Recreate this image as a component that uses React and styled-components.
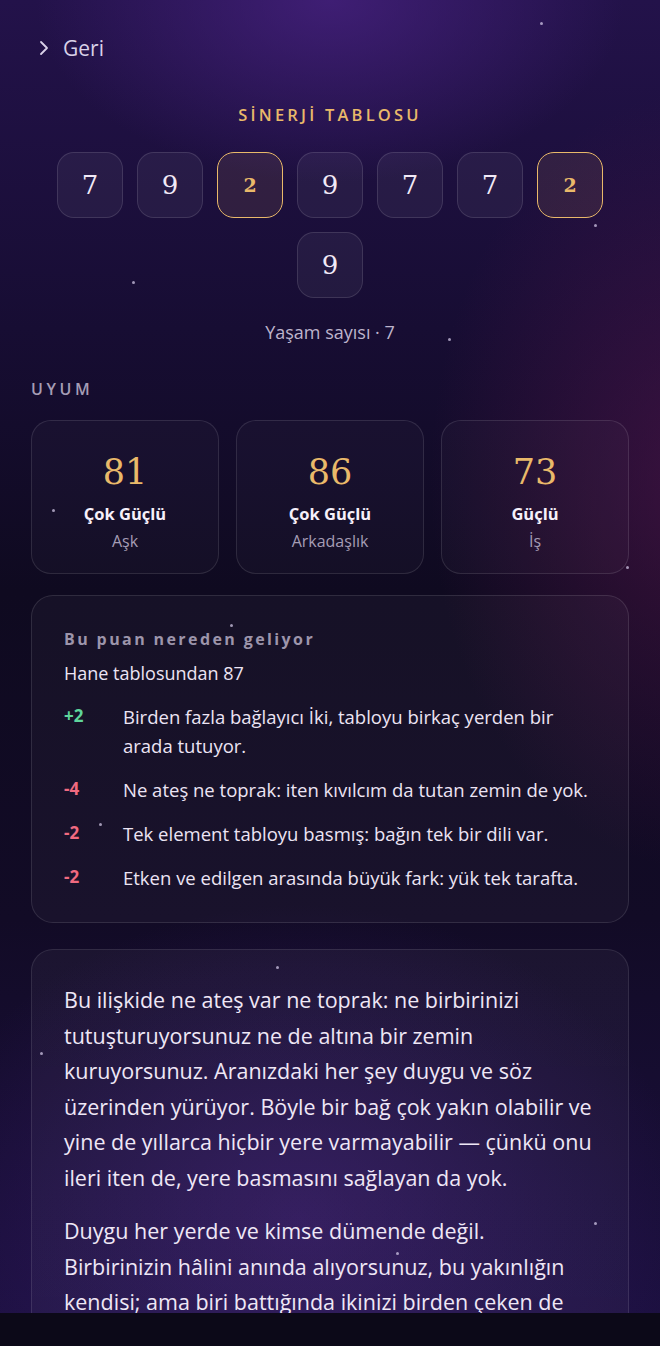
import React from 'react'
import styled, { createGlobalStyle } from 'styled-components'

const GlobalStyle = createGlobalStyle`
    html, body {
        margin: 0;
        padding: 0;
        background: #0c0918;
    }
    * {
        box-sizing: border-box;
    }
`

const gold = '#e9b96a'
const text = '#ece4f4'
const muted = '#a59db5'

const board = [
    { n: 7 }, { n: 9 }, { n: 2, hot: true }, { n: 9 },
    { n: 7 }, { n: 7 }, { n: 2, hot: true }, { n: 9 },
]

const scores = [
    { value: 81, label: 'Çok Güçlü', area: 'Aşk' },
    { value: 86, label: 'Çok Güçlü', area: 'Arkadaşlık' },
    { value: 73, label: 'Güçlü', area: 'İş' },
]

const reasons = [
    { delta: '+2', text: 'Birden fazla bağlayıcı İki, tabloyu birkaç yerden bir arada tutuyor.' },
    { delta: '-4', text: 'Ne ateş ne toprak: iten kıvılcım da tutan zemin de yok.' },
    { delta: '-2', text: 'Tek element tabloyu basmış: bağın tek bir dili var.' },
    { delta: '-2', text: 'Etken ve edilgen arasında büyük fark: yük tek tarafta.' },
]

const stars = [
    [540, 22], [594, 224], [132, 281], [448, 338], [52, 509], [626, 566],
    [230, 624], [99, 823], [276, 966], [40, 1052], [594, 1222], [396, 1252],
]

export default function App() {
    return (
        <>
            <GlobalStyle />
            <Screen>
                {stars.map(([x, y], i) => (
                    <Star key={i} style={{ left: x, top: y }} />
                ))}
                <Content>
                    <Back>
                        <svg width="14" height="18" viewBox="0 0 14 18" fill="none">
                            <path d="M4 3l6 6-6 6" stroke="#d9d1e8" strokeWidth="1.8" strokeLinecap="round" strokeLinejoin="round" />
                        </svg>
                        Geri
                    </Back>

                    <Heading>SİNERJİ TABLOSU</Heading>
                    <Board>
                        {board.map((t, i) => (
                            <Tile key={i} hot={t.hot}>{t.n}</Tile>
                        ))}
                    </Board>
                    <LifeNumber>Yaşam sayısı · 7</LifeNumber>

                    <SectionLabel>UYUM</SectionLabel>
                    <ScoreRow>
                        {scores.map((s, i) => (
                            <ScoreCard key={i}>
                                <ScoreValue>{s.value}</ScoreValue>
                                <ScoreLabel>{s.label}</ScoreLabel>
                                <ScoreArea>{s.area}</ScoreArea>
                            </ScoreCard>
                        ))}
                    </ScoreRow>

                    <Panel>
                        <PanelTitle>Bu puan nereden geliyor</PanelTitle>
                        <Base>Hane tablosundan 87</Base>
                        <Reasons>
                            {reasons.map((r, i) => (
                                <Reason key={i}>
                                    <Delta positive={r.delta.startsWith('+')}>{r.delta}</Delta>
                                    <ReasonText>{r.text}</ReasonText>
                                </Reason>
                            ))}
                        </Reasons>
                    </Panel>

                    <Story>
                        <p>
                            Bu ilişkide ne ateş var ne toprak: ne birbirinizi tutuşturuyorsunuz ne de altına bir zemin
                            kuruyorsunuz. Aranızdaki her şey duygu ve söz üzerinden yürüyor. Böyle bir bağ çok yakın olabilir ve
                            yine de yıllarca hiçbir yere varmayabilir — çünkü onu ileri iten de, yere basmasını sağlayan da yok.
                        </p>
                        <p>
                            Duygu her yerde ve kimse dümende değil. Birbirinizin hâlini anında alıyorsunuz, bu yakınlığın
                            kendisi; ama biri battığında ikinizi birden çeken de yok. Birlikte yükselip birlikte düşüyorsunuz.
                        </p>
                    </Story>
                </Content>
            </Screen>
            <BottomBar />
        </>
    )
}

const Screen = styled.div`
    position: relative;
    height: 1313px;
    overflow: hidden;
    background:
        radial-gradient(ellipse 420px 260px at 330px 0px, rgba(72, 34, 130, 0.75), transparent 70%),
        radial-gradient(ellipse 360px 520px at 700px 480px, rgba(90, 22, 80, 0.55), transparent 75%),
        radial-gradient(ellipse 520px 420px at 300px 1220px, rgba(64, 30, 120, 0.55), transparent 75%),
        linear-gradient(180deg, #23124a 0%, #170d33 25%, #0f0a20 45%, #120b26 70%, #1c1040 100%);
    font-family: "Open Sans", "Noto Sans", sans-serif;
    color: ${text};
`

const Star = styled.span`
    position: absolute;
    width: 3px;
    height: 3px;
    border-radius: 50%;
    background: rgba(220, 210, 240, 0.7);
`

const Content = styled.div`
    display: flex;
    flex-direction: column;
    padding: 0 31px;
`

const Back = styled.div`
    display: flex;
    align-items: center;
    gap: 12px;
    margin-top: 34px;
    margin-left: 6px;
    font-size: 21px;
    color: #d9d1e8;
    height: 28px;
`

const Heading = styled.div`
    margin-top: 42px;
    text-align: center;
    color: ${gold};
    font-size: 16.5px;
    font-weight: 600;
    letter-spacing: 3.2px;
    line-height: 22px;
`

const Board = styled.div`
    display: flex;
    flex-wrap: wrap;
    justify-content: center;
    gap: 14px;
    width: 546px;
    margin: 26px auto 0;
`

const Tile = styled.div`
    width: 66px;
    height: 66px;
    border-radius: 17px;
    display: flex;
    align-items: center;
    justify-content: center;
    font-family: "DejaVu Serif", "Liberation Serif", serif;
    font-size: ${({ hot }) => (hot ? '19px' : '26px')};
    font-weight: ${({ hot }) => (hot ? 700 : 400)};
    color: ${({ hot }) => (hot ? gold : '#f1e9f7')};
    background: ${({ hot }) => (hot ? 'rgba(232, 180, 110, 0.1)' : 'rgba(255, 255, 255, 0.05)')};
    border: ${({ hot }) => (hot ? `1.5px solid ${gold}` : '1px solid rgba(255, 255, 255, 0.12)')};
`

const LifeNumber = styled.div`
    margin-top: 22px;
    text-align: center;
    color: #bdb4cc;
    font-size: 18px;
    line-height: 24px;
`

const SectionLabel = styled.div`
    margin-top: 34px;
    color: ${muted};
    font-size: 16px;
    font-weight: 600;
    letter-spacing: 3.6px;
    line-height: 22px;
`

const ScoreRow = styled.div`
    display: grid;
    grid-template-columns: repeat(3, 1fr);
    gap: 17px;
    margin-top: 20px;
`

const ScoreCard = styled.div`
    height: 154px;
    border-radius: 20px;
    border: 1px solid rgba(255, 255, 255, 0.11);
    background: rgba(255, 255, 255, 0.025);
    display: flex;
    flex-direction: column;
    align-items: center;
    padding-top: 29px;
`

const ScoreValue = styled.div`
    font-family: "DejaVu Serif", "Liberation Serif", serif;
    color: ${gold};
    font-size: 35px;
    line-height: 44px;
`

const ScoreLabel = styled.div`
    margin-top: 9px;
    font-size: 16.5px;
    font-weight: 700;
    line-height: 22px;
    color: #f6f0fa;
`

const ScoreArea = styled.div`
    margin-top: 5px;
    font-size: 16px;
    line-height: 22px;
    color: ${muted};
`

const Panel = styled.div`
    margin-top: 21px;
    border-radius: 22px;
    border: 1px solid rgba(255, 255, 255, 0.11);
    background: rgba(255, 255, 255, 0.03);
    padding: 32px 32px 30px;
`

const PanelTitle = styled.div`
    color: #9d95ab;
    font-size: 16px;
    font-weight: 700;
    letter-spacing: 2.4px;
    line-height: 22px;
`

const Base = styled.div`
    margin-top: 12px;
    font-size: 18px;
    line-height: 22px;
`

const Reasons = styled.div`
    display: flex;
    flex-direction: column;
    gap: 15px;
    margin-top: 18px;
`

const Reason = styled.div`
    display: grid;
    grid-template-columns: 59px 1fr;
`

const Delta = styled.div`
    font-size: 17px;
    font-weight: 700;
    line-height: 28px;
    color: ${({ positive }) => (positive ? '#5fd59c' : '#f06a80')};
`

const ReasonText = styled.div`
    font-size: 18.5px;
    line-height: 29px;
    color: ${text};
`

const Story = styled.div`
    margin-top: 26px;
    border-radius: 22px 22px 0 0;
    border: 1px solid rgba(255, 255, 255, 0.1);
    border-bottom: none;
    background: linear-gradient(180deg, rgba(255, 255, 255, 0.04), rgba(255, 255, 255, 0.03));
    padding: 32px 32px 40px;

    p {
        margin: 0 0 18px;
        font-size: 21.5px;
        line-height: 35.5px;
        color: #efe7f6;
    }
`

const BottomBar = styled.div`
    height: 33px;
    background: #0c0918;
`
